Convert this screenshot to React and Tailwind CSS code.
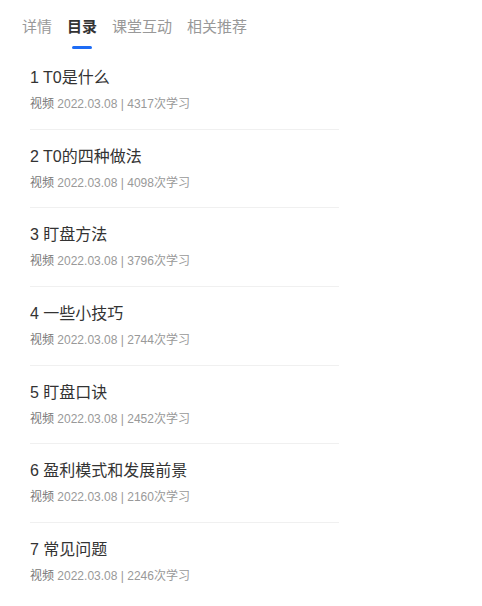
import React from "react";

const tabs = ["详情", "目录", "课堂互动", "相关推荐"];

const lessons = [
  { title: "1 T0是什么", count: 4317 },
  { title: "2 T0的四种做法", count: 4098 },
  { title: "3 盯盘方法", count: 3796 },
  { title: "4 一些小技巧", count: 2744 },
  { title: "5 盯盘口诀", count: 2452 },
  { title: "6 盈利模式和发展前景", count: 2160 },
  { title: "7 常见问题", count: 2246 },
];

export default function App() {
  return (
    <div
      className="w-[482px] min-h-[606px] bg-white"
      style={{ fontFamily: '"Liberation Sans", Arial, "Noto Sans CJK SC", sans-serif' }}
    >
      {/* tabs */}
      <div className="flex gap-[15px] pl-[22px] pt-[16px]">
        {tabs.map((tab, i) => (
          <div key={tab} className="flex flex-col items-center">
            <span
              className={`text-[15px] leading-[22px] ${
                i === 1 ? "font-bold text-[#333]" : "text-[#999]"
              }`}
            >
              {tab}
            </span>
            <span
              className={`mt-[8px] h-[3px] w-[20px] rounded-full ${
                i === 1 ? "bg-[#1e6cf5]" : "bg-transparent"
              }`}
            />
          </div>
        ))}
      </div>

      {/* lesson list */}
      <div className="ml-[30px] mt-[2px] w-[309px]">
        {lessons.map((lesson, i) => (
          <div
            key={lesson.title}
            className={`pt-[16px] pb-[16.67px] ${
              i < lessons.length - 1 ? "border-b border-[#f0f0f0]" : ""
            }`}
          >
            <div className="text-[16px] leading-[22px] text-[#333]">
              {lesson.title}
            </div>
            <div className="mt-[7px] text-[12px] leading-[16px] text-[#999]">
              <span className="text-[#777]">视频</span> 2022.03.08 | {lesson.count}次学习
            </div>
          </div>
        ))}
      </div>
    </div>
  );
}
